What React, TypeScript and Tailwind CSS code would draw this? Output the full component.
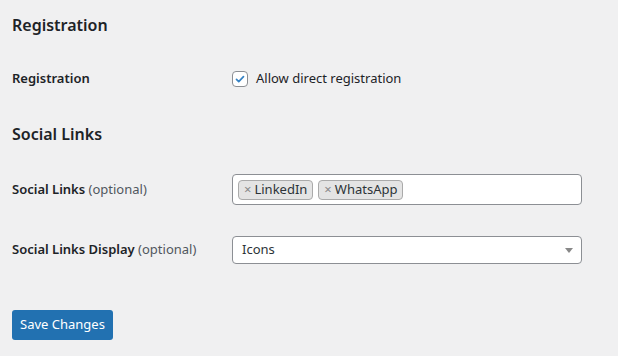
const font = { fontFamily: '"Noto Sans", "Open Sans", sans-serif' };

const Tag = ({ label }: { label: string }) => (
  <span className="flex items-center h-[20px] px-[5px] border border-[#aaa] rounded-[4px] bg-[#e4e4e4] text-[13px] text-[#2c3338] leading-none">
    <span className="text-[#888] mr-[3px] text-[13px]">×</span>
    {label}
  </span>
);

export default function App() {
  return (
    <div
      className="w-[618px] h-[356px] bg-[#f0f0f1] text-[#1d2327] px-[12px] pt-[14px] text-[13px]"
      style={font}
    >
      <h2 className="text-[16px] font-semibold leading-[22px]">Registration</h2>

      <div className="flex items-center mt-[33px] h-[20px]">
        <div className="w-[220px] text-[13px] font-semibold">Registration</div>
        <label className="flex items-center gap-[8px]">
          <span className="w-[16px] h-[16px] border border-[#8c8f94] rounded-[4px] bg-white flex items-center justify-center">
            <svg viewBox="0 0 20 20" className="w-[16px] h-[16px]">
              <path
                d="M5 10.5l3.2 3.2L15 6.5"
                fill="none"
                stroke="#3582c4"
                strokeWidth="2.4"
                strokeLinecap="round"
                strokeLinejoin="round"
              />
            </svg>
          </span>
          <span className="text-[13px]">Allow direct registration</span>
        </label>
      </div>

      <h2 className="text-[16px] font-semibold leading-[22px] mt-[34px]">Social Links</h2>

      <div className="flex items-center mt-[29px]">
        <div className="w-[220px] text-[13px] font-semibold">
          Social Links <span className="font-normal text-[#50575e]">(optional)</span>
        </div>
        <div className="w-[350px] h-[31px] border border-[#8c8f94] rounded-[4px] bg-white flex items-center gap-[5px] px-[5px]">
          <Tag label="LinkedIn" />
          <Tag label="WhatsApp" />
        </div>
      </div>

      <div className="flex items-center mt-[31px]">
        <div className="w-[220px] text-[13px] font-semibold">
          Social Links Display <span className="font-normal text-[#50575e]">(optional)</span>
        </div>
        <div className="w-[350px] h-[28px] border border-[#8c8f94] rounded-[4px] bg-white flex items-center justify-between pl-[9px] pr-[8px]">
          <span className="text-[13px] text-[#2c3338]">Icons</span>
          <span className="w-0 h-0 border-l-[4px] border-r-[4px] border-t-[5px] border-l-transparent border-r-transparent border-t-[#888]" />
        </div>
      </div>

      <button className="mt-[46px] h-[30px] px-[8px] bg-[#2271b1] text-white text-[13px] rounded-[3px]">
        Save Changes
      </button>
    </div>
  );
}
